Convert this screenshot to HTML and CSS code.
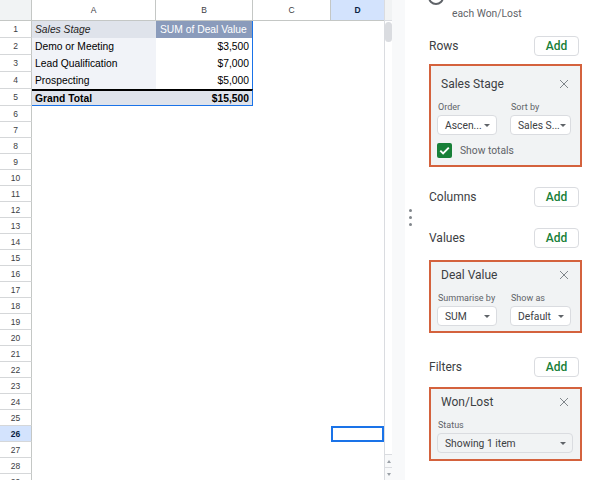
FILE: index.html
```html
<!DOCTYPE html>
<html>
<head>
<meta charset="utf-8">
<link rel="stylesheet" href="styles.css">
</head>
<body>
<div class="app">
  <div class="sheet">
    <div class="grid">
      <div class="row head">
        <div class="corner"></div>
        <div class="colh">A</div>
        <div class="colh">B</div>
        <div class="colh">C</div>
        <div class="colh sel">D</div>
      </div>
      <div class="row tall">
        <div class="rowh">1</div>
        <div class="cell pv-title">Sales Stage</div>
        <div class="cell pv-head edge">SUM of Deal Value</div>
        <div class="cell"></div><div class="cell"></div>
      </div>
      <div class="row tall">
        <div class="rowh">2</div>
        <div class="cell pv-key">Demo or Meeting</div>
        <div class="cell num edge">$3,500</div>
        <div class="cell"></div><div class="cell"></div>
      </div>
      <div class="row tall">
        <div class="rowh">3</div>
        <div class="cell pv-key">Lead Qualification</div>
        <div class="cell num edge">$7,000</div>
        <div class="cell"></div><div class="cell"></div>
      </div>
      <div class="row tall">
        <div class="rowh">4</div>
        <div class="cell pv-key">Prospecting</div>
        <div class="cell num edge">$5,000</div>
        <div class="cell"></div><div class="cell"></div>
      </div>
      <div class="row tall">
        <div class="rowh">5</div>
        <div class="cell pv-total">Grand Total</div>
        <div class="cell pv-total num edge">$15,500</div>
        <div class="cell"></div><div class="cell"></div>
      </div>
      <div class="row"><div class="rowh">6</div></div>
      <div class="row"><div class="rowh">7</div></div>
      <div class="row"><div class="rowh">8</div></div>
      <div class="row"><div class="rowh">9</div></div>
      <div class="row"><div class="rowh">10</div></div>
      <div class="row"><div class="rowh">11</div></div>
      <div class="row"><div class="rowh">12</div></div>
      <div class="row"><div class="rowh">13</div></div>
      <div class="row"><div class="rowh">14</div></div>
      <div class="row"><div class="rowh">15</div></div>
      <div class="row"><div class="rowh">16</div></div>
      <div class="row"><div class="rowh">17</div></div>
      <div class="row"><div class="rowh">18</div></div>
      <div class="row"><div class="rowh">19</div></div>
      <div class="row"><div class="rowh">20</div></div>
      <div class="row"><div class="rowh">21</div></div>
      <div class="row"><div class="rowh">22</div></div>
      <div class="row"><div class="rowh">23</div></div>
      <div class="row"><div class="rowh">24</div></div>
      <div class="row"><div class="rowh">25</div></div>
      <div class="row">
        <div class="rowh sel">26</div>
        <div class="cell"></div><div class="cell"></div><div class="cell"></div>
        <div class="cell active"></div>
      </div>
      <div class="row"><div class="rowh">27</div></div>
      <div class="row"><div class="rowh">28</div></div>
      <div class="row"><div class="rowh">29</div></div>
    </div>
    <div class="vscroll">
      <div class="vs-top"></div>
      <div class="vs-track"><div class="thumb"></div></div>
      <div class="vs-btn"><span class="tri up"></span></div>
      <div class="vs-btn"><span class="tri down"></span></div>
    </div>
  </div>
  <div class="gutter"></div>
  <div class="panel">
    <div class="handle">
      <span class="dot"></span><span class="dot"></span><span class="dot"></span>
    </div>
    <div class="content">
      <div class="radio"></div>
      <div class="radio-text">each Won/Lost</div>

      <div class="section-head s-rows">
        <span class="section-title">Rows</span>
        <button class="add">Add</button>
      </div>
      <div class="card c-rows">
        <div class="card-head">
          <span class="card-title">Sales Stage</span>
          <svg class="close" width="10" height="10" viewBox="0 0 10 10"><path d="M1 1L9 9M9 1L1 9" stroke="#80868b" stroke-width="1" fill="none"/></svg>
        </div>
        <div class="pair">
          <div class="field">
            <div class="flabel">Order</div>
            <div class="select"><span>Ascen...</span><span class="caret"></span></div>
          </div>
          <div class="field">
            <div class="flabel">Sort by</div>
            <div class="select"><span>Sales S...</span><span class="caret"></span></div>
          </div>
        </div>
        <div class="check-row">
          <span class="checkbox"><svg width="15" height="15" viewBox="0 0 15 15"><path d="M3.3 7.6L6.1 10.4L11.8 4.6" stroke="#fff" stroke-width="1.9" fill="none"/></svg></span>
          <span class="check-label">Show totals</span>
        </div>
      </div>

      <div class="section-head s-cols">
        <span class="section-title">Columns</span>
        <button class="add">Add</button>
      </div>

      <div class="section-head s-vals">
        <span class="section-title">Values</span>
        <button class="add">Add</button>
      </div>
      <div class="card c-vals">
        <div class="card-head">
          <span class="card-title">Deal Value</span>
          <svg class="close" width="10" height="10" viewBox="0 0 10 10"><path d="M1 1L9 9M9 1L1 9" stroke="#80868b" stroke-width="1" fill="none"/></svg>
        </div>
        <div class="pair">
          <div class="field">
            <div class="flabel">Summarise by</div>
            <div class="select"><span>SUM</span><span class="caret"></span></div>
          </div>
          <div class="field">
            <div class="flabel">Show as</div>
            <div class="select"><span>Default</span><span class="caret"></span></div>
          </div>
        </div>
      </div>

      <div class="section-head s-filters">
        <span class="section-title">Filters</span>
        <button class="add">Add</button>
      </div>
      <div class="card c-filters">
        <div class="card-head">
          <span class="card-title">Won/Lost</span>
          <svg class="close" width="10" height="10" viewBox="0 0 10 10"><path d="M1 1L9 9M9 1L1 9" stroke="#80868b" stroke-width="1" fill="none"/></svg>
        </div>
        <div class="field">
          <div class="flabel">Status</div>
          <div class="select wide"><span>Showing 1 item</span><span class="caret"></span></div>
        </div>
      </div>
    </div>
  </div>
</div>
</body>
</html>
```
FILE: styles.css
```css
* { box-sizing: border-box; margin: 0; padding: 0; }
html, body { width: 594px; height: 480px; overflow: hidden; background: #fff; }
body { font-family: "Liberation Sans", Arial, sans-serif; color: #000; }

.app { display: flex; height: 480px; }

/* ---------- sheet ---------- */
.sheet { display: flex; width: 392px; height: 480px; overflow: hidden; flex: none; }
.grid { width: 384px; display: flex; flex-direction: column; flex: none; }
.row { display: grid; grid-template-columns: 32px 124px 97px 78px 53px; height: 16px; flex: none; }
.row.tall { height: 17px; }
.row.head { height: 21px; }

.corner { background: #f1f3f4; border-right: 1px solid #c4c7c5; border-bottom: 1px solid #c4c7c5; }
.colh {
  display: flex; align-items: center; justify-content: center;
  font-size: 8.5px; color: #3c4043;
  border-right: 1px solid #c4c7c5; border-bottom: 1px solid #c4c7c5;
}
.colh.sel { background: #d3e3fd; color: #0b1f44; font-weight: bold; border-right: none; }

.rowh {
  display: flex; align-items: center; justify-content: center;
  font-size: 8.5px; color: #3c4043;
  border-right: 1px solid #c4c7c5; border-bottom: 1px solid #d5d7d9;
}
.rowh.sel { background: #d3e3fd; color: #0b1f44; font-weight: bold; }

.cell {
  display: flex; align-items: center; font-size: 10.3px; padding: 0 3px; white-space: nowrap; overflow: hidden;
}
.cell.num { justify-content: flex-end; }
.cell.edge { border-right: 1px solid #1a73e8; }
.pv-title { background: #dfe3eb; font-style: italic; color: #1f1f1f; }
.pv-head { background: #8a9bbb; color: #fff; padding-left: 4px; }
.pv-key { background: #f1f3f8; }
.pv-total {
  background: #dfe3eb; font-weight: bold;
  border-top: 2px solid #000; border-bottom: 1px solid #1a73e8;
}
.cell.active { box-shadow: inset 0 0 0 2px #1a73e8; height: 16px; }

.vscroll { width: 8px; border-left: 1px solid #dadce0; display: flex; flex-direction: column; flex: none; }
.vs-top { height: 21px; background: #f1f3f4; border-bottom: 1px solid #dadce0; }
.vs-track { flex: 1; padding-top: 1px; }
.thumb { width: 7px; height: 20px; background: #dadce0; border-radius: 4px; }
.vs-btn { height: 13px; border-top: 1px solid #dadce0; display: flex; align-items: center; justify-content: center; background: #f8f9fa; }
.tri { width: 0; height: 0; border-left: 2.5px solid transparent; border-right: 2.5px solid transparent; }
.tri.up { border-bottom: 3px solid #9aa0a6; }
.tri.down { border-top: 3px solid #9aa0a6; }

.gutter { width: 13px; background: #f8f9fa; flex: none; }

/* ---------- panel ---------- */
.panel { flex: 1; display: flex; font-family: Roboto, "Noto Sans", sans-serif; color: #3c4043; }
.handle { width: 24px; flex: none; display: flex; flex-direction: column; gap: 4px; padding: 209px 0 0 4px; }
.dot { width: 3px; height: 3px; border-radius: 50%; background: #80868b; }

.content { width: 153px; flex: none; display: flex; flex-direction: column; }

.radio { width: 16px; height: 16px; border: 2px solid #5f6368; border-radius: 50%; margin: -11px 0 0 -1px; }
.radio-text { font-size: 10.3px; line-height: 14px; color: #5f6368; margin: 2px 0 0 23px; }

.section-head { display: flex; justify-content: space-between; align-items: center; height: 20px; }
.s-rows { margin-top: 15px; }
.s-cols { margin-top: 20px; }
.s-vals { margin-top: 21px; }
.s-filters { margin-top: 24px; }
.section-title { font-size: 12px; color: #3c4043; }
.add {
  width: 45px; height: 20px; margin-right: 3px;
  background: #fff; border: 1px solid #dadce0; border-radius: 4px;
  font-family: Roboto, sans-serif; font-size: 12px; font-weight: 500; color: #188038;
}

.card {
  border: 2px solid #d4623d; background: #f1f3f4;
  padding: 5px 9px 5px 6px;
}
.c-rows { margin-top: 8px; padding-top: 10px; padding-bottom: 7px; }
.c-vals { margin-top: 12px; }
.c-filters { margin-top: 10px; padding-bottom: 6px; }

.card-head { display: flex; justify-content: space-between; align-items: center; height: 16px; padding-left: 4px; }
.card-title { font-size: 12px; color: #3c4043; }
.close { margin-right: 2px; }

.pair { display: grid; grid-template-columns: 60px 61px; column-gap: 13px; }
.field { display: flex; flex-direction: column; }
.flabel { font-size: 9px; line-height: 11px; color: #5f6368; margin-top: 10px; padding-left: 1px; }
.select {
  margin-top: 2px; height: 20px; background: #fff; border: 1px solid #dadce0; border-radius: 4px;
  display: flex; align-items: center; justify-content: space-between; padding: 0 6px 0 7px;
  font-size: 10.3px; color: #3c4043; white-space: nowrap;
}
.select.wide { background: #f1f3f4; width: 136px; }
.caret { width: 0; height: 0; border-left: 3px solid transparent; border-right: 3px solid transparent; border-top: 3.5px solid #5f6368; }

.check-row { display: flex; align-items: center; margin-top: 8px; gap: 8px; }
.checkbox { width: 15px; height: 15px; background: #188038; border-radius: 2px; display: flex; }
.check-label { font-size: 10.3px; color: #5f6368; }
```
